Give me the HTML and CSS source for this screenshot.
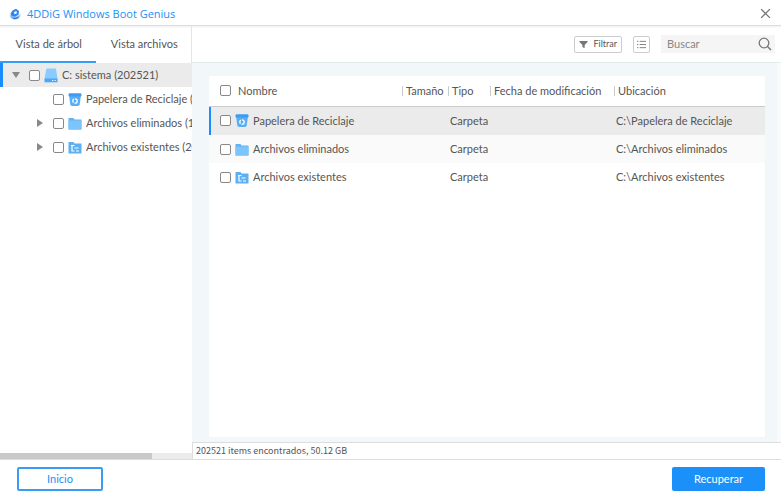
FILE: index.html
```html
<!doctype html>
<html lang="es">
<head>
    <meta charset="utf-8">
    <title>4DDiG Windows Boot Genius</title>
    <link rel="stylesheet" href="styles.css">
</head>
<body>

    <!-- shared icons -->
    <svg class="sprite" aria-hidden="true">
        <symbol id="bin" viewBox="0 0 14 14">
            <path d="M1 2.500h12l-1.300 9.500a1.800 1.800 0 0 1-1.700 1.500H4a1.800 1.800 0 0 1-1.700-1.500z" fill="#5aaef5"/>
            <rect x="0.500" y="0.800" width="13" height="3.200" rx="1.200" fill="#3f9df0"/>
            <circle cx="7" cy="8.500" r="2.200" fill="none" stroke="#fff" stroke-width="1.300" stroke-dasharray="3.600 1"/>
        </symbol>
        <symbol id="folder" viewBox="0 0 14 14">
            <path d="M.5 1.500h5l1 1.500h7v10H.5z" fill="#62b3f4"/>
            <path d="M.5 4h13v9H.5z" fill="#7cc4fb"/>
        </symbol>
        <symbol id="folder-tree" viewBox="0 0 14 14">
            <path d="M.5 1.500h5l1 1.500h7v10H.5z" fill="#5db0f2"/>
            <path d="M4 5v5.500h2.500M3 5h3.500M6.500 7.500h4M8 10.500h3" fill="none" stroke="#fff" stroke-width="1.200"/>
        </symbol>
        <symbol id="drive" viewBox="0 0 14 15">
            <path d="M2.500 .5h9.500L13.500 11H.5z" fill="#8accff"/>
            <path d="M.5 10.500h13v3.800H.5z" fill="#4ba8f5"/>
            <path d="M8 12.500h1.200M10.500 12.500h1.200" stroke="#fff"/>
        </symbol>
    </svg>

    <div class="app">
        <!-- title bar -->
        <header class="titlebar">
            <svg class="logo" viewBox="0 0 12 12" aria-hidden="true">
                <path d="M.5 6c1 3 8 4 11-.5.3 3.800-2.500 6-5.500 6S.5 9.500.5 6z" fill="#9fc8fb"/>
                <path d="M1.500 5.500L3.500 2.500 7 .8l3 2.200-.5 3.700-3.500 2-3.500-.5z" fill="#2f86f0"/>
                <path d="M1.500 8.500c3 1.800 6 1.500 9-.5l-1.500 2.500-4 .8z" fill="#2879ea"/>
                <path d="M5 4l2.500-1 .3 2.500-2.200.8z" fill="#fff"/>
            </svg>
            <h1>4DDiG Windows Boot Genius</h1>
            <button class="close" type="button" aria-label="Cerrar">
                <svg viewBox="0 0 10 10"><path d="M1 1l8 8M9 1L1 9" fill="none" stroke="#777" stroke-width="1.200"/></svg>
            </button>
        </header>

        <div class="main">
            <!-- tree -->
            <aside class="sidebar">
                <nav class="tabs">
                    <button class="tab current" type="button">Vista de árbol</button>
                    <button class="tab" type="button">Vista archivos</button>
                </nav>
                <ul class="tree">
                    <li class="node root">
                        <span class="arrow down"></span>
                        <input type="checkbox" id="t1">
                        <svg class="icon"><use href="#drive"/></svg>
                        <label for="t1">C: sistema (202521)</label>
                    </li>
                    <li class="node child">
                        <span class="arrow"></span>
                        <input type="checkbox" id="t2">
                        <svg class="icon"><use href="#bin"/></svg>
                        <label for="t2">Papelera de Reciclaje (</label>
                    </li>
                    <li class="node child">
                        <span class="arrow right"></span>
                        <input type="checkbox" id="t3">
                        <svg class="icon"><use href="#folder"/></svg>
                        <label for="t3">Archivos eliminados (1</label>
                    </li>
                    <li class="node child">
                        <span class="arrow right"></span>
                        <input type="checkbox" id="t4">
                        <svg class="icon"><use href="#folder-tree"/></svg>
                        <label for="t4">Archivos existentes (20</label>
                    </li>
                </ul>
                <div class="scrollbar"><div class="thumb"></div></div>
            </aside>

            <!-- file list -->
            <section class="content">
                <div class="toolbar">
                    <button class="tool" type="button">
                        <svg viewBox="0 0 10 10"><path d="M.5 1h9v1.300L6.300 5.500V9L3.800 8V5.500L.5 2.300z" fill="#777"/></svg>
                        Filtrar
                    </button>
                    <button class="tool list" type="button" aria-label="Lista">
                        <svg viewBox="0 0 10 10"><path d="M0 1.500h1.500M3 1.500h7M0 5h1.500M3 5h7M0 8.500h1.500M3 8.500h7" stroke="#777"/></svg>
                    </button>
                    <div class="search">
                        <input type="text" placeholder="Buscar" aria-label="Buscar">
                        <svg viewBox="0 0 14 14"><circle cx="6" cy="6" r="4.800" fill="none" stroke="#777" stroke-width="1.300"/><path d="M9.500 9.500l3.500 3.500" stroke="#777" stroke-width="1.500"/></svg>
                    </div>
                </div>
                <div class="list-area">
                    <div class="panel">
                        <table>
                            <colgroup>
                                <col class="c-name"><col class="c-size"><col class="c-type"><col class="c-date"><col>
                            </colgroup>
                            <thead>
                                <tr>
                                    <th><div class="cell"><input type="checkbox" id="all"><label for="all">Nombre</label></div></th>
                                    <th><span>Tamaño</span></th>
                                    <th><span>Tipo</span></th>
                                    <th><span>Fecha de modificación</span></th>
                                    <th><span>Ubicación</span></th>
                                </tr>
                            </thead>
                            <tbody>
                                <tr class="selected">
                                    <td><div class="cell"><input type="checkbox" id="f1"><svg class="icon"><use href="#bin"/></svg><label for="f1">Papelera de Reciclaje</label></div></td>
                                    <td></td>
                                    <td>Carpeta</td>
                                    <td></td>
                                    <td>C:\Papelera de Reciclaje</td>
                                </tr>
                                <tr>
                                    <td><div class="cell"><input type="checkbox" id="f2"><svg class="icon"><use href="#folder"/></svg><label for="f2">Archivos eliminados</label></div></td>
                                    <td></td>
                                    <td>Carpeta</td>
                                    <td></td>
                                    <td>C:\Archivos eliminados</td>
                                </tr>
                                <tr>
                                    <td><div class="cell"><input type="checkbox" id="f3"><svg class="icon"><use href="#folder-tree"/></svg><label for="f3">Archivos existentes</label></div></td>
                                    <td></td>
                                    <td>Carpeta</td>
                                    <td></td>
                                    <td>C:\Archivos existentes</td>
                                </tr>
                            </tbody>
                        </table>
                    </div>
                </div>
                <div class="status">202521 items encontrados, 50.12 GB</div>
            </section>
        </div>

        <footer class="footer">
            <button class="btn" type="button">Inicio</button>
            <button class="btn primary" type="button">Recuperar</button>
        </footer>
    </div>
</body>
</html>
```

FILE: styles.css
```css
* {
    box-sizing: border-box;
    margin: 0;
    padding: 0;
}

body {
    font: 11px/16px Lato, "Open Sans", sans-serif;
    color: #555;
    background: #fff;
}

button, input {
    font: inherit;
    color: inherit;
    border: 0;
    background: none;
}

ul {
    list-style: none;
}

.sprite {
    display: none;
}

.app {
    display: flex;
    flex-direction: column;
    height: 100vh;
}

/* title bar */
.titlebar {
    display: flex;
    align-items: center;
    gap: 6px;
    height: 26px;
    padding: 2px 10px 0 9px;
    border-bottom: 1px solid #ddd;
    box-shadow: 0 1px 2px #eee;
}

.titlebar h1 {
    font-family: "Open Sans", sans-serif;
    font-size: 11px;
    font-weight: normal;
    color: #2191f3;
}

.logo {
    width: 12px;
    height: 12px;
}

.close {
    display: flex;
    margin-left: auto;
}

.close svg {
    width: 11px;
    height: 11px;
}

.main {
    display: flex;
    flex: 1;
    min-height: 0;
}

/* tree */
.sidebar {
    display: flex;
    flex-direction: column;
    flex: none;
    width: 192px;
}

.tabs {
    display: flex;
    height: 37px;
    border-right: 1px solid #e5e5e5;
}

.tab {
    flex: 1;
    padding-left: 2px;
    border-bottom: 2px solid transparent;
    white-space: nowrap;
}

.tab.current {
    border-bottom-color: #3a9df5;
}

.tree {
    flex: 1;
    overflow: hidden;
}

.node {
    display: flex;
    align-items: center;
    gap: 4px;
    height: 24px;
    white-space: nowrap;
}

.root {
    padding-left: 9px;
    background: #ebebeb;
    border-left: 3px solid #1a8cff;
}

.child {
    padding-left: 36px;
}

.node label {
    flex: 1;
    overflow: hidden;
}

input[type="checkbox"] {
    appearance: none;
    flex: none;
    width: 11px;
    height: 11px;
    border: 1px solid #888;
    border-radius: 2px;
    background: #fff;
}

.icon {
    flex: none;
    width: 14px;
    height: 15px;
}

.arrow {
    flex: none;
    width: 13px;
    height: 8px;
    background: #888;
    clip-path: polygon(0 0);
}

.arrow.down {
    clip-path: polygon(0 1px, 8px 1px, 4px 7px);
}

.arrow.right {
    clip-path: polygon(1px 0, 7px 4px, 1px 8px);
}

.scrollbar {
    height: 6px;
    background: #ececec;
}

.thumb {
    width: 79%;
    height: 100%;
    background: #c9c9c9;
}

/* file list */
.content {
    display: flex;
    flex-direction: column;
    flex: 1;
    min-width: 0;
}

.toolbar {
    display: flex;
    align-items: center;
    justify-content: flex-end;
    gap: 11px;
    height: 37px;
    padding-right: 6px;
    border-bottom: 1px solid #e3ebed;
}

.tool {
    display: flex;
    align-items: center;
    gap: 5px;
    height: 17px;
    padding: 0 4px;
    border: 1px solid #ccc;
    border-radius: 2px;
    font-size: 9px;
}

.tool.list {
    padding: 0 3px;
}

.tool svg {
    width: 9px;
    height: 9px;
}

.search {
    display: flex;
    align-items: center;
    width: 114px;
    height: 18px;
    padding: 0 3px 0 6px;
    background: #f5f5f5;
}

.search input {
    flex: 1;
    min-width: 0;
}

.search input::placeholder {
    color: #888;
}

.search svg {
    width: 14px;
    height: 14px;
}

.list-area {
    display: flex;
    flex: 1;
    padding: 13px 12px 5px 17px;
    background: #f2f8f9;
    border-right: 4px solid #f8fbfc;
}

.panel {
    flex: 1;
    background: #fff;
    border-radius: 2px;
}

table {
    width: 100%;
    table-layout: fixed;
    border-collapse: collapse;
}

.c-name {
    width: 193px;
}

.c-size {
    width: 46px;
}

.c-type {
    width: 42px;
}

.c-date {
    width: 124px;
}

th {
    height: 30px;
    font-weight: normal;
    text-align: left;
    white-space: nowrap;
    border-bottom: 1px solid #ccc;
}

th span {
    display: block;
    height: 10px;
    padding-left: 3px;
    line-height: 10px;
    border-left: 1px solid #ccc;
}

td {
    height: 28px;
    padding-left: 2px;
    white-space: nowrap;
}

.cell {
    display: flex;
    align-items: center;
    gap: 4px;
    padding-left: 9px;
}

th .cell {
    gap: 7px;
    padding-left: 11px;
}

tbody tr:nth-child(2) {
    background: #fafafa;
}

.selected {
    background: #ebebeb;
}

.selected td {
    height: 29px;
}

.selected td:first-child {
    box-shadow: inset 2px 0 #1a8cff;
}

.status {
    height: 17px;
    padding-left: 3px;
    border-top: 1px solid #ddd;
    border-left: 1px solid #ddd;
    font-family: "Noto Sans CJK SC", "Open Sans", sans-serif;
    font-size: 9px;
    line-height: 16px;
}

/* bottom buttons */
.footer {
    display: flex;
    justify-content: space-between;
    height: 38px;
    padding: 7px 16px 0 17px;
    border-top: 1px solid #ddd;
}

.btn {
    width: 86px;
    height: 24px;
    border: 2px solid #3a9df5;
    border-radius: 2px;
    color: #2191f3;
}

.btn.primary {
    width: 93px;
    border-color: #1b90f8;
    background: #1b90f8;
    color: #fff;
}
```
